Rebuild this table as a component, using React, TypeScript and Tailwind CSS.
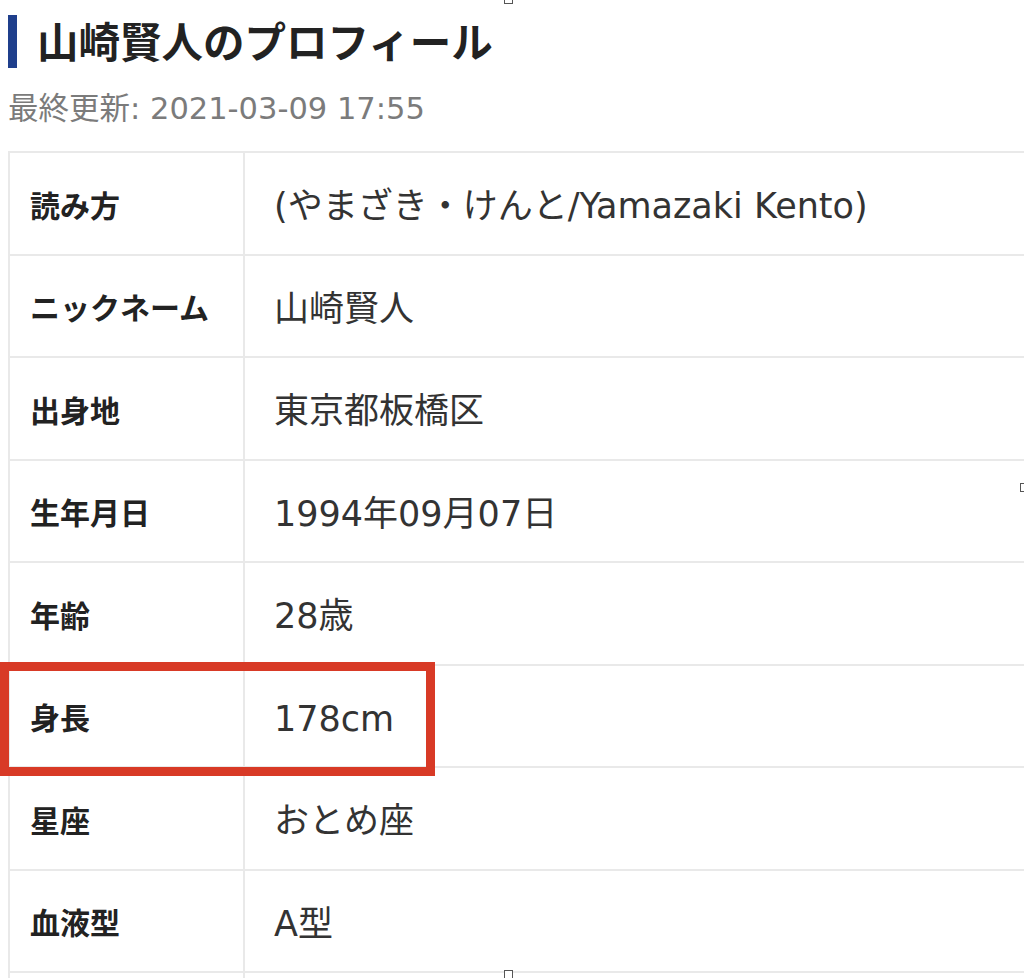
import React from "react";

const rows: [string, string][] = [
  ["読み方", "(やまざき・けんと/Yamazaki Kento)"],
  ["ニックネーム", "山崎賢人"],
  ["出身地", "東京都板橋区"],
  ["生年月日", "1994年09月07日"],
  ["年齢", "28歳"],
  ["身長", "178cm"],
  ["星座", "おとめ座"],
  ["血液型", "A型"],
  ["", ""],
];

export default function App() {
  return (
    <div
      className="relative w-[1024px] h-[978px] overflow-hidden bg-white"
      style={{ fontFamily: '"DejaVu Sans", "Noto Sans CJK JP", sans-serif' }}
    >
      <div className="pl-[8px] pt-[15px]">
        <div className="flex items-center h-[53px]">
          <div className="w-[9px] h-[53px] bg-[#1f3f8c]" />
          <h1 className="ml-[20px] h-[53px] pt-[5px] text-[41.5px] leading-[48px] font-bold text-[#222] whitespace-nowrap">
            山崎賢人のプロフィール
          </h1>
        </div>
        <div className="mt-[21px] h-[40px] text-[30.5px] leading-[40px] text-[#7b7b7b] whitespace-nowrap">
          最終更新: 2021-03-09 17:55
        </div>
        <div className="mt-[22px] w-[1100px] border-l-2 border-[#e9e9e9]">
          {rows.map(([k, v], i) => (
            <div key={i} className="flex h-[102.5px] border-t-2 border-[#e9e9e9]">
              <div className="w-[235px] shrink-0 flex items-center pt-[6px] pl-[20px] border-r-2 border-[#e9e9e9] text-[30px] font-bold text-[#222] whitespace-nowrap">
                {k}
              </div>
              <div className="flex items-center pt-[6px] pl-[29px] text-[35px] text-[#333] whitespace-nowrap">
                {v}
              </div>
            </div>
          ))}
        </div>
      </div>

      <div className="absolute left-[0px] top-[662px] w-[435px] h-[114px] border-[9px] border-[#d83a26]" />

      <div className="absolute left-[504px] top-[-5px] w-[9px] h-[9px] border border-[#555] bg-white" />
      <div className="absolute left-[1020px] top-[483px] w-[9px] h-[9px] border border-[#555] bg-white" />
      <div className="absolute left-[504px] top-[970px] w-[9px] h-[9px] border border-[#555] bg-white" />
    </div>
  );
}
